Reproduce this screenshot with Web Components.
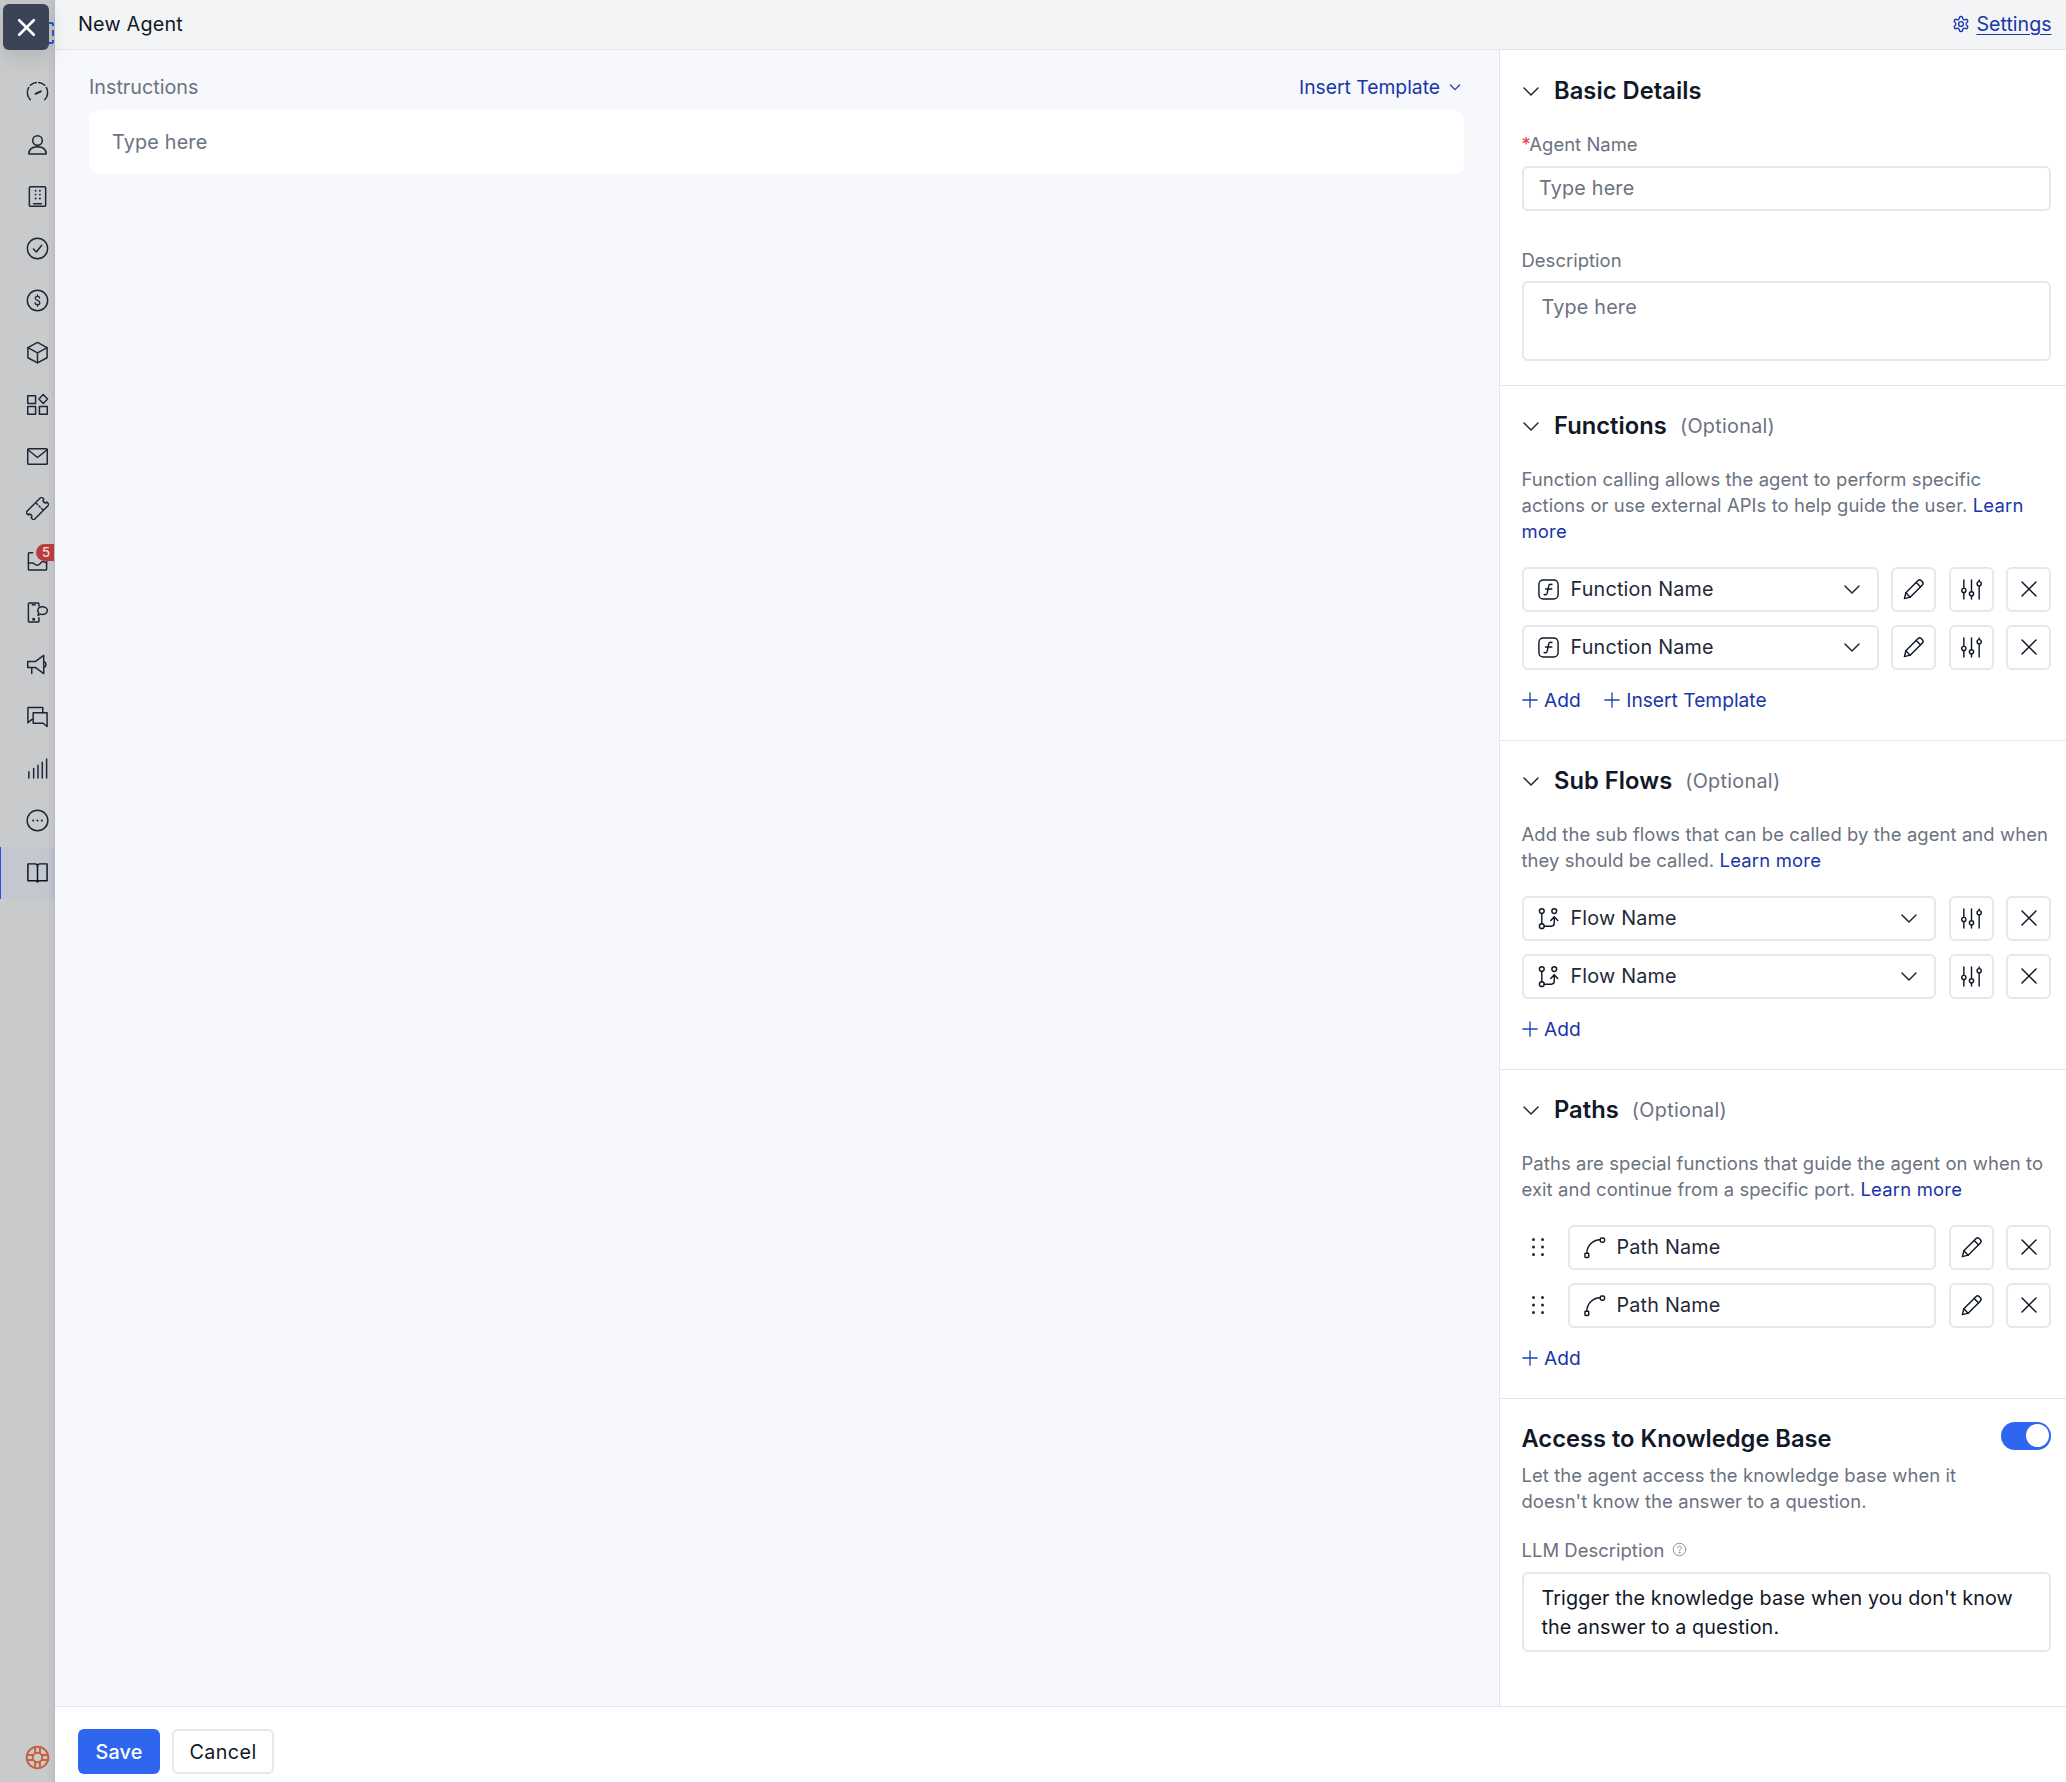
<!DOCTYPE html>
<html lang="en">
<head>
<meta charset="utf-8">
<title>New Agent</title>
<style>
  html, body { margin: 0; padding: 0; height: 100%; background: #fff; }
  body { font: 400 19.76px/24px Inter, "Liberation Sans", sans-serif; letter-spacing: .2px; color: #111827; overflow: hidden; }
</style>
</head>
<body>
<app-frame>
  <nav-rail slot="rail">
    <nav-item icon="gauge"></nav-item>
    <nav-item icon="person"></nav-item>
    <nav-item icon="building"></nav-item>
    <nav-item icon="check"></nav-item>
    <nav-item icon="dollar"></nav-item>
    <nav-item icon="cube"></nav-item>
    <nav-item icon="apps"></nav-item>
    <nav-item icon="mail"></nav-item>
    <nav-item icon="ticket"></nav-item>
    <nav-item icon="inbox" badge="5"></nav-item>
    <nav-item icon="phone"></nav-item>
    <nav-item icon="megaphone"></nav-item>
    <nav-item icon="chats"></nav-item>
    <nav-item icon="bars"></nav-item>
    <nav-item icon="dots"></nav-item>
    <nav-item icon="book" active></nav-item>
  </nav-rail>

  <top-bar slot="top">New Agent</top-bar>

  <prompt-pane slot="pane"></prompt-pane>

  <side-panel slot="side">
    <panel-section first>
      <span slot="title">Basic Details</span>
      <form-label required>Agent Name</form-label>
      <form-box placeholder>Type here</form-box>
      <form-label gap="37">Description</form-label>
      <form-box multi placeholder>Type here</form-box>
    </panel-section>

    <panel-section optional>
      <span slot="title">Functions</span>
      <help-text>Function calling allows the agent to perform specific<br>actions or use external APIs to help guide the user. <a>Learn<br>more</a></help-text>
      <row-stack>
        <pick-row icon="fn" chevron actions="pencil sliders x">Function Name</pick-row>
        <pick-row icon="fn" chevron actions="pencil sliders x">Function Name</pick-row>
      </row-stack>
      <add-bar><add-link>Add</add-link><add-link>Insert Template</add-link></add-bar>
    </panel-section>

    <panel-section optional>
      <span slot="title">Sub Flows</span>
      <help-text>Add the sub flows that can be called by the agent and when<br>they should be called. <a>Learn more</a></help-text>
      <row-stack>
        <pick-row icon="flow" chevron actions="sliders x">Flow Name</pick-row>
        <pick-row icon="flow" chevron actions="sliders x">Flow Name</pick-row>
      </row-stack>
      <add-bar><add-link>Add</add-link></add-bar>
    </panel-section>

    <panel-section optional>
      <span slot="title">Paths</span>
      <help-text>Paths are special functions that guide the agent on when to<br>exit and continue from a specific port. <a>Learn more</a></help-text>
      <row-stack>
        <pick-row icon="curve" drag actions="pencil x">Path Name</pick-row>
        <pick-row icon="curve" drag actions="pencil x">Path Name</pick-row>
      </row-stack>
      <add-bar><add-link>Add</add-link></add-bar>
    </panel-section>

    <knowledge-section></knowledge-section>
  </side-panel>

  <save-bar slot="bottom"></save-bar>
</app-frame>

<script>
const ICONS = {
  x: '<path d="M5 5L19 19M19 5L5 19"/>',
  chevron: '<path d="M5 9l7 7 7-7"/>',
  plus: '<path d="M12 2.5v19M2.5 12h19"/>',
  gauge: '<path d="M4.500 19.500A10.600 10.600 0 0 1 2.820 6.700"/><path d="M4.500 4.500A10.600 10.600 0 0 1 10.800 1.470"/><path d="M13.200 1.470A10.600 10.600 0 0 1 19.500 4.500"/><path d="M21.180 6.700A10.600 10.600 0 0 1 19.500 19.500"/><path d="M10 13.400l5.500-2.600" stroke-width="2"/>',
  person: '<circle cx="12" cy="7.8" r="5"/><path d="M3 22c0-5 3.6-7.6 9-7.6s9 2.600 9 7.600z"/>',
  building: '<rect x="3.500" y="1.800" width="17" height="20.400" rx="1.200"/><path d="M8 19.600h8"/><g fill="currentColor" stroke="none"><circle cx="10" cy="6" r="1"/><circle cx="14.500" cy="6" r="1"/><circle cx="10" cy="10" r="1"/><circle cx="14.500" cy="10" r="1"/><circle cx="10" cy="14" r="1"/><circle cx="14.500" cy="14" r="1"/></g>',
  check: '<circle cx="12" cy="12" r="10.600"/><path d="M7.800 12.500l3 3.200 5.600-7"/>',
  dollar: '<circle cx="12" cy="12" r="10.600"/><path d="M14.300 9.600c-.1-1.300-1-2-2.300-2s-2.300.8-2.300 2c0 2.800 4.700 1.900 4.700 4.700 0 1.300-1 2.100-2.400 2.100s-2.400-.8-2.400-2.100M12 6v1.600M12 16.400V18" stroke-width="1.300"/>',
  cube: '<path d="M12 1.500L22 7v10.500L12 22.800 2 17.500V7z"/><path d="M2 7l10 5.300L22 7M12 12.300v10.500"/>',
  apps: '<rect x="1.800" y="2.800" width="8.200" height="8.200"/><path d="M18 1.600l4.500 4.700L18 11l-4.500-4.700z"/><rect x="1.800" y="14" width="8.200" height="8.200"/><rect x="14" y="14" width="8.200" height="8.200"/>',
  mail: '<rect x="1.800" y="3.800" width="20.400" height="16.400" rx="1"/><path d="M2 5l10 8 10-8"/>',
  ticket: '<g transform="rotate(-45 12 12)"><path d="M.5 6.300h23v3.600a2.100 2.100 0 0 0 0 4.200v3.600H.5v-3.600a2.100 2.100 0 0 0 0-4.200z"/><path d="M15 7.500v1.500M15 11.200v1.600M15 15v1.500"/></g>',
  inbox: '<path d="M7 4H3.500a1 1 0 0 0-1 1v16a1 1 0 0 0 1 1h17a1 1 0 0 0 1-1V5"/><path d="M2.500 14.500H7c1.500 0 1.800 2.500 5 2.500s3.500-4 5-4 3 1 4.500 1.500"/>',
  phone: '<path d="M13.500 5.500V3a1 1 0 0 0-1-1H3.500a1 1 0 0 0-1 1v18a1 1 0 0 0 1 1h9a1 1 0 0 0 1-1v-3.500"/><path d="M6.500 3.800h3"/><circle cx="8" cy="19" r=".8" fill="currentColor"/><path d="M17 6c3 0 5.300 1.700 5.300 4s-2.300 4-5.300 4c-.7 0-1.300-.1-1.900-.3L12.500 15l.8-2.600c-.7-.6-1-1.500-1-2.400 0-2.300 2-4 4.700-4z"/>',
  megaphone: '<path d="M1.800 8.800H10L18.500 2.500v19L10 15.200H1.800z"/><path d="M18.800 9a3.200 3.200 0 0 1 0 6M6 15.500v6"/>',
  chats: '<path d="M7.500 15H6.200L2 18.500V2.500h15.500V8"/><path d="M7.500 8.200H22v14.300L18 19H7.500z"/>',
  bars: '<path d="M3 22v-6.500M8 22V12M12.500 22V8.500M17 22V5.500M21.500 22V2"/>',
  dots: '<circle cx="12" cy="12" r="10.800"/><g fill="currentColor" stroke="none"><circle cx="7.500" cy="12" r="1.100"/><circle cx="12" cy="12" r="1.100"/><circle cx="16.500" cy="12" r="1.100"/></g>',
  book: '<path d="M2 3h7.500c1.400 0 2.500 1 2.500 2.400C12 4 13.100 3 14.500 3H22v17.500h-8.500L12 22l-1.500-1.500H2z"/><path d="M12 5.400v15"/>',
  ring: '<circle cx="12" cy="12" r="10.400"/><circle cx="12" cy="12" r="4.600"/><path d="M9.700 2v5.700M14.300 2v5.700M9.700 16.300V22M14.300 16.300V22M2 9.700h5.700M2 14.300h5.700M16.300 9.700H22M16.300 14.300H22"/>',
  gear: '<path d="M12.220 2h-.44a2 2 0 0 0-2 2v.18a2 2 0 0 1-1 1.730l-.43.250a2 2 0 0 1-2 0l-.15-.08a2 2 0 0 0-2.730.730l-.22.380a2 2 0 0 0 .730 2.730l.15.100a2 2 0 0 1 1 1.720v.510a2 2 0 0 1-1 1.740l-.15.090a2 2 0 0 0-.730 2.730l.22.380a2 2 0 0 0 2.730.730l.15-.08a2 2 0 0 1 2 0l.43.250a2 2 0 0 1 1 1.730V20a2 2 0 0 0 2 2h.44a2 2 0 0 0 2-2v-.18a2 2 0 0 1 1-1.730l.43-.25a2 2 0 0 1 2 0l.15.08a2 2 0 0 0 2.730-.73l.22-.39a2 2 0 0 0-.73-2.730l-.15-.08a2 2 0 0 1-1-1.740v-.5a2 2 0 0 1 1-1.740l.15-.09a2 2 0 0 0 .73-2.730l-.22-.38a2 2 0 0 0-2.730-.73l-.15.08a2 2 0 0 1-2 0l-.43-.25a2 2 0 0 1-1-1.730V4a2 2 0 0 0-2-2z"/><circle cx="12" cy="12" r="3.200"/>',
  fn: '<rect x="2" y="2" width="20" height="20" rx="4.500"/><path d="M15.500 6.800c-1.800-.6-3-.1-3.300 1.600l-1.500 7.200c-.3 1.700-1.500 2.200-3.200 1.600M9 11.500h6.500"/>',
  pencil: '<path d="M2.500 21.500l1.500-6L16.800 2.700a2.300 2.300 0 0 1 3.200 0l1.300 1.300a2.300 2.300 0 0 1 0 3.200L8.500 20z"/><path d="M14.800 4.700l4.500 4.500M4 15.500L8.500 20"/>',
  sliders: '<path d="M4 2v8.500M4 15.500V22M12 2v12M12 19v3M20 2v1.500M20 8.500V22"/><circle cx="4" cy="13" r="2.200"/><circle cx="12" cy="16.500" r="2.200"/><circle cx="20" cy="6" r="2.200"/>',
  flow: '<circle cx="5" cy="4.300" r="2.500"/><circle cx="5" cy="20" r="2.500"/><circle cx="18" cy="4.300" r="2.500"/><path d="M5 6.800v10.700M7.500 20H15c2 0 3-1 3-3V10.500M14.300 14l3.700-3.700 3.700 3.700"/>',
  curve: '<rect x="2" y="18" width="4" height="4.500" rx=".8"/><rect x="18" y="2" width="4.500" height="4.500" rx="1.500"/><path d="M4 18c0-7.500 6-14 14-14"/>',
  help: '<circle cx="12" cy="12" r="10"/><path d="M9 9.500c0-1.800 1.300-3 3-3s3 1.100 3 2.700c0 2.300-3 2.500-3 4.800"/><circle cx="12" cy="17" r=".8" fill="currentColor"/>'
};

class Shadowed extends HTMLElement {
  constructor() { super(); this.attachShadow({ mode: 'open' }); }
  connectedCallback() { this.shadowRoot.innerHTML = this.render(); }
}
const define = (name, render) => customElements.define(name, class extends Shadowed { render() { return render(this); } });

define('ui-icon', el => {
  const size = el.getAttribute('size') || 24;
  const sw = el.getAttribute('stroke') || 1.5;
  return `<style>:host{display:inline-flex;flex:none;width:${size}px;height:${size}px}svg{display:block;width:100%;height:100%;fill:none;stroke:currentColor;stroke-width:${sw};stroke-linecap:round;stroke-linejoin:round}</style>
  <svg viewBox="0 0 24 24" aria-hidden="true">${ICONS[el.getAttribute('name')] || ''}</svg>`;
});

define('app-frame', () => `<style>
  :host{display:grid;grid-template-columns:55px 1fr;grid-template-rows:50px 1fr 76px;width:2066px;height:1782px;position:relative;overflow:hidden}
  .rail{grid-row:1/4;grid-column:1;display:flex;min-height:0}
  .top{grid-row:1;grid-column:2;display:block}
  .body{grid-row:2;grid-column:2;display:flex;min-height:0}
  .bottom{grid-row:3;grid-column:2;display:block}
</style>
<div class="rail"><slot name="rail"></slot></div>
<div class="top"><slot name="top"></slot></div>
<div class="body"><slot name="pane"></slot><slot name="side"></slot></div>
<div class="bottom"><slot name="bottom"></slot></div>`);

define('nav-rail', () => `<style>
  :host{display:flex;flex-direction:column;width:55px;height:1782px;padding-top:66.500px;box-sizing:border-box;position:relative;
    background:linear-gradient(to right,#c9cacc 0,#c9cacc 84%,#bfc1c4 98%,#b5b7ba 100%);color:#1c2636}
  .close{position:absolute;left:3px;top:4px;width:46px;height:46px;border-radius:6px;background:#3a4456;color:#fff;display:flex;align-items:center;justify-content:center;box-shadow:0 6px 22px rgba(0,0,0,.12);z-index:2}
  .peek{position:absolute;left:44px;top:18px;width:10px;height:30px;color:#2258d6}
  .ring{margin-top:auto;height:25px;margin-bottom:12px;display:flex;padding-left:25px;color:#c4623f}
</style>
<svg class="peek" viewBox="0 0 10 30" fill="none" stroke="currentColor" stroke-width="2"><path d="M5 5h4M9 5v3M9 12v6M9 22v3M9 25H5"/></svg>
<div class="close"><ui-icon name="x" size="25" stroke="2.600"></ui-icon></div>
<slot></slot>
<div class="ring"><ui-icon name="ring" size="25" stroke="1.900"></ui-icon></div>`);

define('nav-item', el => {
  const active = el.hasAttribute('active');
  const badge = el.getAttribute('badge');
  return `<style>
    :host{display:flex;height:52px;flex:none;align-items:center;position:relative;box-sizing:border-box;padding-left:26px;
      ${active ? 'background:linear-gradient(to right,#c3c7cf,#c3c7cf 85%,#b4b8c0);border-left:1.500px solid #1d55e0;padding-left:25px;color:#0d1420;' : ''}}
    .badge{position:absolute;left:36px;top:9px;width:18px;height:17px;border-radius:9px 0 0 9px;background:#b93c3c;color:#f4dcdc;font:500 13px/17px Inter,"Liberation Sans",sans-serif;letter-spacing:0;text-align:center;padding-left:2px;box-sizing:border-box}
  </style><ui-icon name="${el.getAttribute('icon')}" size="23" stroke="1.550"></ui-icon>${badge ? `<span class="badge">${badge}</span>` : ''}`;
});

define('top-bar', () => `<style>
  :host{display:flex;align-items:center;justify-content:space-between;height:50px;box-sizing:border-box;padding:0 14.500px 1px 23px;background:#f3f4f6;border-bottom:1.500px solid #e3e5ea;color:#111827}
  a{display:inline-flex;align-items:center;gap:6px;color:#1a35a8;font-size:19.600px;letter-spacing:0}
  u{text-underline-offset:3px}
</style><span><slot></slot></span><a><ui-icon name="gear" size="18" stroke="1.800"></ui-icon><u>Settings</u></a>`);

define('prompt-pane', () => `<style>
  :host{display:block;flex:1;min-width:0;background:#f6f8fc;padding:25px 35px 0 34px;box-sizing:border-box}
  .row{display:flex;justify-content:space-between;align-items:center;height:24px;color:#6b7280;letter-spacing:0;padding-right:1px}
  a{display:inline-flex;align-items:center;gap:7px;color:#1a35a8;font-size:19.300px}
  a ui-icon{color:#1a35a8}
  .box{margin-top:11px;height:64px;background:#fff;border-radius:9px;display:flex;align-items:center;padding:0 23px;color:#6b7280}
</style>
<div class="row"><span>Instructions</span><a>Insert Template <ui-icon name="chevron" size="16" stroke="1.800"></ui-icon></a></div>
<div class="box">Type here</div>`);

define('side-panel', () => `<style>
  :host{display:block;flex:none;width:567px;height:100%;overflow:hidden;background:#fff;border-left:1.500px solid #e3e5ea;box-sizing:border-box}
</style><slot></slot>`);

define('panel-section', el => `<style>
  :host{display:block;padding:${el.hasAttribute('first') ? 27 : 26}px 15px ${el.hasAttribute('first') ? 23.5 : 28}px 21.500px;border-bottom:1.500px solid #e3e5ea}
  .head{display:flex;align-items:center;height:28px;margin-bottom:${el.hasAttribute('first') ? 27 : 26}px}
  .head ui-icon{margin:0 11px 0 -2.500px;color:#1f2937}
  .t{font-weight:600;font-size:23.700px;letter-spacing:.05px;color:#111827}
  .o{margin-left:13px;color:#6b7280;letter-spacing:.3px}
</style>
<div class="head"><ui-icon name="chevron" size="24" stroke="1.500"></ui-icon><span class="t"><slot name="title"></slot></span>${el.hasAttribute('optional') ? '<span class="o">(Optional)</span>' : ''}</div>
<slot></slot>`);

define('form-label', el => `<style>
  :host{display:block;color:#6b7280;font-size:18.450px;letter-spacing:.03px;height:24px;margin-top:${el.getAttribute('gap') || 0}px;margin-bottom:9.500px}
  i{color:#e24a4a;font-style:normal}
</style>${el.hasAttribute('required') ? '<i>*</i>' : ''}<slot></slot>`);

define('form-box', el => {
  const multi = el.hasAttribute('multi');
  const ph = el.hasAttribute('placeholder');
  return `<style>
    :host{display:${multi ? 'block' : 'flex'};align-items:center;box-sizing:border-box;border:2px solid #e5e7ec;border-radius:6px;background:#fff;
      color:${ph ? '#6b7280' : '#111827'};letter-spacing:${ph ? '.2px' : '.1px'};height:${multi ? 80 : 45}px;padding:${multi ? `${ph ? 11 : 10}px 18px` : '0 15.500px'};line-height:${el.getAttribute('lh') || 26}px}
  </style><slot></slot>`;
});

define('help-text', () => `<style>
  :host{display:block;color:#6b7280;font-size:18.450px;letter-spacing:.08px;line-height:26px;margin-bottom:23px}
  ::slotted(a){color:#1a35a8;letter-spacing:.2px}
</style><slot></slot>`);

define('row-stack', () => `<style>:host{display:flex;flex-direction:column;gap:13px}</style><slot></slot>`);

define('square-btn', el => `<style>
  :host{display:flex;flex:none;width:45px;height:45px;box-sizing:border-box;align-items:center;justify-content:center;border:2px solid #e5e7ec;border-radius:6px;background:#fff;color:#111827}
</style><ui-icon name="${el.getAttribute('icon')}" size="${el.getAttribute('icon') === 'x' ? 24 : 23}" stroke="1.500"></ui-icon>`);

define('pick-row', el => {
  const actions = (el.getAttribute('actions') || '').split(' ').filter(Boolean);
  return `<style>
    :host{display:flex;gap:12.500px;height:45px;align-items:center}
    .drag{width:33.500px;box-sizing:border-box;padding-right:1px;flex:none;display:flex;justify-content:center;color:#1f2937}
    .drag svg{display:block}
    .box{flex:1;min-width:0;height:45px;box-sizing:border-box;display:flex;align-items:center;border:2px solid #e5e7ec;border-radius:6px;background:#fff;padding:0 13px 0 13px;color:#1f2937}
    .box ui-icon.lead{margin-right:11px;color:#111827}
    .t{flex:1}
    .c{color:#1f2937}
  </style>
  ${el.hasAttribute('drag') ? `<div class="drag"><svg width="14" height="20" viewBox="0 0 14 20" fill="currentColor"><circle cx="2.500" cy="2.500" r="1.500"/><circle cx="11.500" cy="2.500" r="1.500"/><circle cx="2.500" cy="10" r="1.500"/><circle cx="11.500" cy="10" r="1.500"/><circle cx="2.500" cy="17.500" r="1.500"/><circle cx="11.500" cy="17.500" r="1.500"/></svg></div>` : ''}
  <div class="box"><ui-icon class="lead" name="${el.getAttribute('icon')}" size="23" stroke="1.500"></ui-icon><span class="t"><slot></slot></span>${el.hasAttribute('chevron') ? '<ui-icon class="c" name="chevron" size="24" stroke="1.500"></ui-icon>' : ''}</div>
  ${actions.map(a => `<square-btn icon="${a}"></square-btn>`).join('')}`;
});

define('add-bar', () => `<style>:host{display:flex;gap:23px;margin-top:18px;height:24px;align-items:center}</style><slot></slot>`);

define('add-link', () => `<style>
  :host{display:inline-flex;align-items:center;gap:5px;color:#1a35a8;font-size:19.200px;letter-spacing:0;margin-left:-.5px}
  ui-icon{color:#1d44b8}
</style><ui-icon name="plus" size="18" stroke="1.800"></ui-icon><slot></slot>`);

define('ui-toggle', () => `<style>
  :host{display:flex;justify-content:flex-end;align-items:center;width:50.500px;height:28px;box-sizing:border-box;padding-right:2.500px;background:#2f66ef;border-radius:14px}
  i{display:block;width:23px;height:23px;border-radius:50%;background:#fff}
</style><i></i>`);

define('knowledge-section', () => `<style>
  :host{display:block;padding:26px 15px 0 21.500px}
  .head{display:flex;justify-content:space-between;align-items:flex-start;height:28px;margin-bottom:9px}
  h3{margin:0;font-weight:600;font-size:23.700px;letter-spacing:0;line-height:28px;color:#111827}
  ui-toggle{margin-top:-3px}
  .d{color:#6b7280;font-size:18.450px;letter-spacing:.08px;line-height:26px;margin-bottom:24px}
  .l{display:flex;align-items:center;gap:8px;color:#6b7280;font-size:18.450px;letter-spacing:.03px;height:24px;margin-bottom:10.500px}
  .l ui-icon{color:#8b919c}
</style>
<div class="head"><h3>Access to Knowledge Base</h3><ui-toggle></ui-toggle></div>
<div class="d">Let the agent access the knowledge base when it<br>doesn't know the answer to a question.</div>
<div class="l">LLM Description <ui-icon name="help" size="15" stroke="1.600"></ui-icon></div>
<form-box multi lh="29">Trigger the knowledge base when you don't know<br>the answer to a question.</form-box>`);

define('save-bar', () => `<style>
  :host{display:flex;gap:12px;height:76px;box-sizing:border-box;padding:22px 0 0 23px;background:#fff;border-top:1.500px solid #e3e5ea}
  .b{display:flex;align-items:center;justify-content:center;height:45px;box-sizing:border-box;border-radius:6px;padding:0 17px}
  .s{background:#2f66ef;color:#fff;font-weight:500;width:82px}
  .c{background:#fff;color:#111827;border:2px solid #e5e7ec;width:102px;letter-spacing:.4px}
</style><div class="b s">Save</div><div class="b c">Cancel</div>`);
</script>
</body>
</html>
